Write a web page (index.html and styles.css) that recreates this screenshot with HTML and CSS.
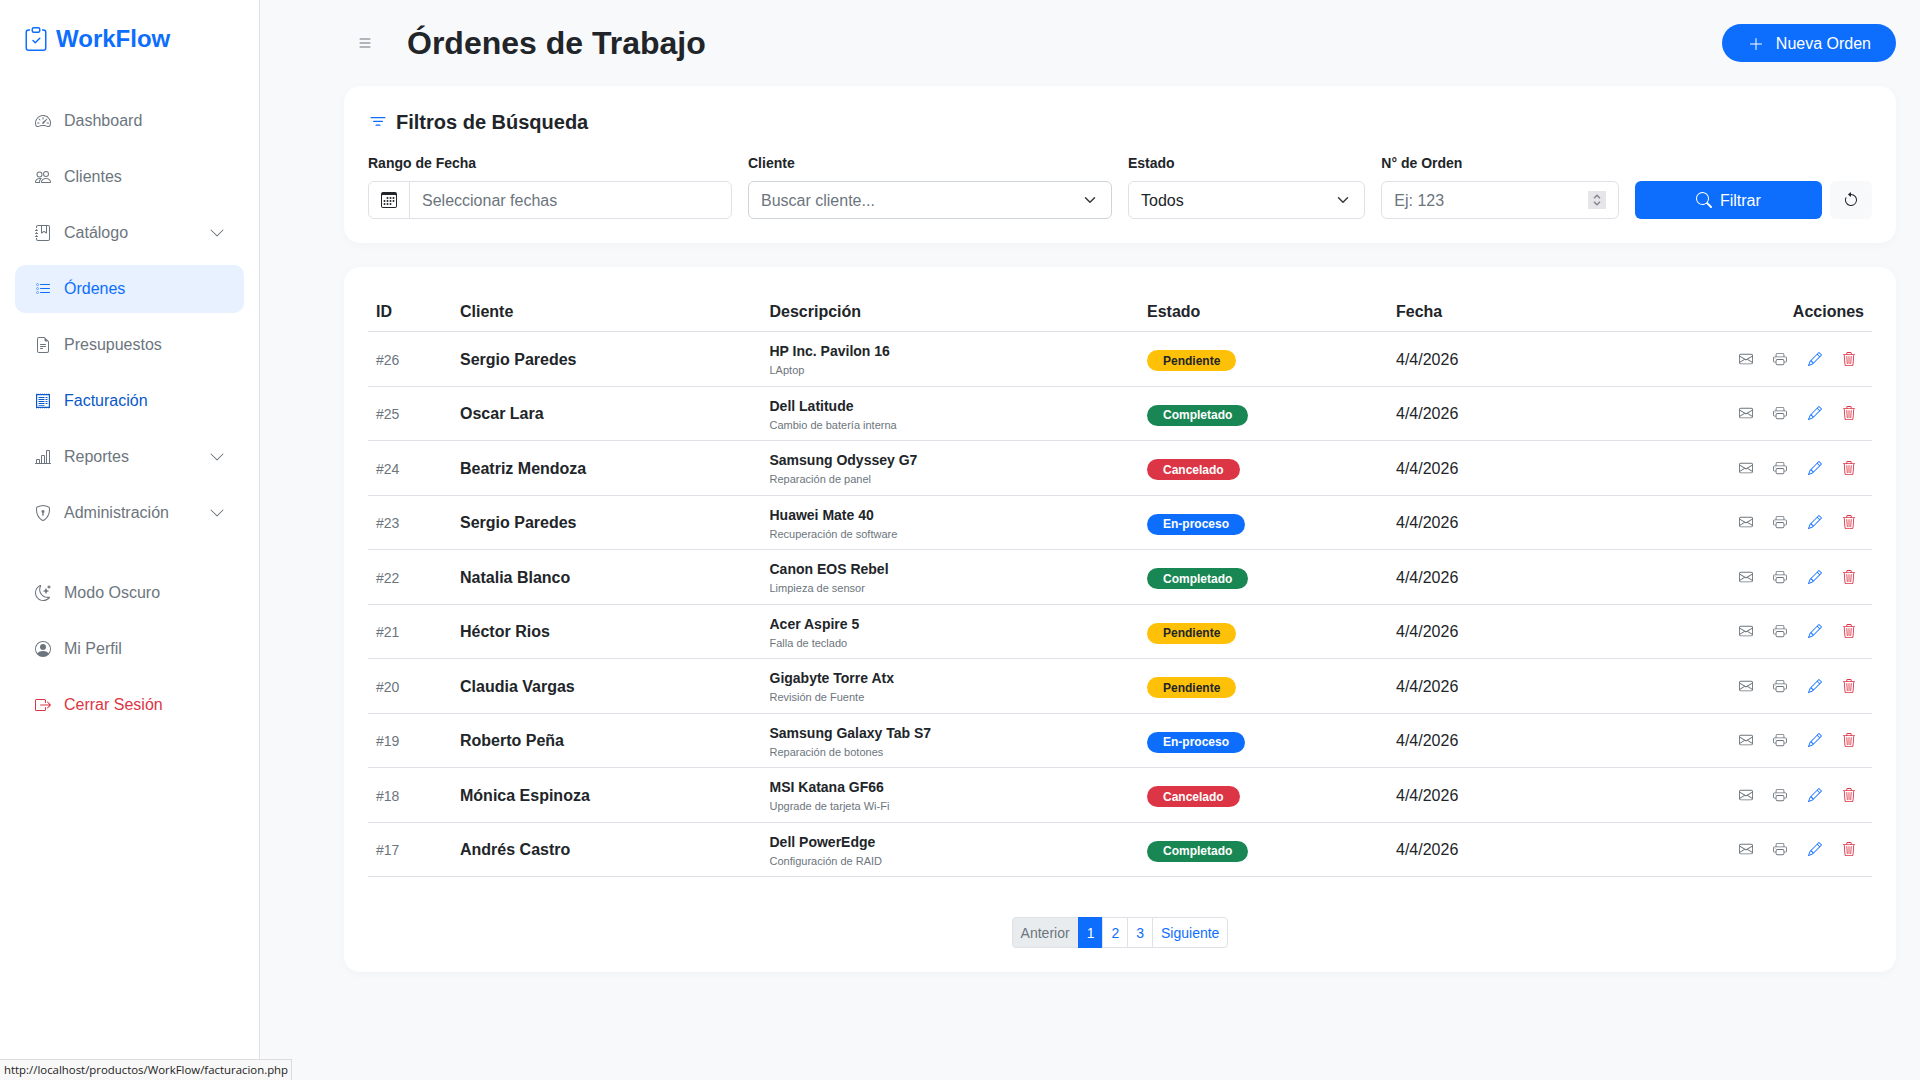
FILE: index.html
```html
<!DOCTYPE html>
<html lang="es">
<head>
<meta charset="utf-8">
<title>Órdenes de Trabajo</title>
<link rel="stylesheet" href="styles.css">
</head>
<body>
<svg class="sprite" xmlns="http://www.w3.org/2000/svg">
<symbol id="i-logo" viewBox="0 0 16 16"><path fill-rule="evenodd" d="M10.854 7.146a.5.5 0 0 1 0 .708l-3 3a.5.5 0 0 1-.708 0l-1.5-1.5a.5.5 0 1 1 .708-.708L7.5 9.793l2.646-2.647a.5.5 0 0 1 .708 0z"/><path d="M4 1.5H3a2 2 0 0 0-2 2V14a2 2 0 0 0 2 2h10a2 2 0 0 0 2-2V3.5a2 2 0 0 0-2-2h-1v1h1a1 1 0 0 1 1 1V14a1 1 0 0 1-1 1H3a1 1 0 0 1-1-1V3.5a1 1 0 0 1 1-1h1v-1z"/><path d="M9.5 1a.5.5 0 0 1 .5.5v1a.5.5 0 0 1-.5.5h-3a.5.5 0 0 1-.5-.5v-1a.5.5 0 0 1 .5-.5h3zm-3-1A1.5 1.5 0 0 0 5 1.5v1A1.5 1.5 0 0 0 6.5 4h3A1.5 1.5 0 0 0 11 2.5v-1A1.5 1.5 0 0 0 9.5 0h-3z"/></symbol>
<symbol id="i-speed" viewBox="0 0 16 16"><path d="M8 4a.5.5 0 0 1 .5.5V6a.5.5 0 0 1-1 0V4.5A.5.5 0 0 1 8 4zM3.732 5.732a.5.5 0 0 1 .707 0l.915.914a.5.5 0 1 1-.708.708l-.914-.915a.5.5 0 0 1 0-.707zM2 10a.5.5 0 0 1 .5-.5h1.586a.5.5 0 0 1 0 1H2.5A.5.5 0 0 1 2 10zm9.5 0a.5.5 0 0 1 .5-.5h1.5a.5.5 0 0 1 0 1H12a.5.5 0 0 1-.5-.5zm.754-4.246a.389.389 0 0 0-.527-.02L7.547 9.31a.91.91 0 1 0 1.302 1.258l3.434-4.297a.389.389 0 0 0-.029-.518z"/><path fill-rule="evenodd" d="M0 10a8 8 0 1 1 15.547 2.661c-.442 1.253-1.845 1.602-2.932 1.25C11.309 13.488 9.475 13 8 13c-1.474 0-3.31.488-4.615.911-1.087.352-2.49.003-2.932-1.25A7.988 7.988 0 0 1 0 10zm8-7a7 7 0 0 0-6.603 9.329c.203.575.923.876 1.68.63C4.397 12.533 6.358 12 8 12s3.604.532 4.923.96c.757.245 1.477-.056 1.68-.631A7 7 0 0 0 8 3z"/></symbol>
<symbol id="i-people" viewBox="0 0 16 16"><path d="M15 14s1 0 1-1-1-4-5-4-5 3-5 4 1 1 1 1h8Zm-7.978-1A.261.261 0 0 1 7 12.996c.001-.264.167-1.03.76-1.72C8.312 10.629 9.282 10 11 10c1.717 0 2.687.63 3.24 1.276.593.69.758 1.457.76 1.72l-.008.002a.274.274 0 0 1-.014.002H7.022ZM11 7a2 2 0 1 0 0-4 2 2 0 0 0 0 4Zm3-2a3 3 0 1 1-6 0 3 3 0 0 1 6 0ZM6.936 9.28a5.88 5.88 0 0 0-1.23-.247A7.35 7.35 0 0 0 5 9c-4 0-5 3-5 4 0 .667.333 1 1 1h4.216A2.238 2.238 0 0 1 5 13c0-1.01.377-2.042 1.09-2.904.243-.294.526-.569.846-.816ZM4.92 10A5.493 5.493 0 0 0 4 13H1c0-.26.164-1.03.76-1.724.545-.636 1.492-1.256 3.16-1.275ZM1.5 5.5a3 3 0 1 1 6 0 3 3 0 0 1-6 0Zm3-2a2 2 0 1 0 0 4 2 2 0 0 0 0-4Z"/></symbol>
<symbol id="i-journal" viewBox="0 0 16 16"><path fill-rule="evenodd" d="M6 8V1h1v6.117L8.743 6.07a.5.5 0 0 1 .514 0L11 7.117V1h1v7a.5.5 0 0 1-.757.429L9 7.083 6.757 8.43A.5.5 0 0 1 6 8z"/><path d="M3 0h10a2 2 0 0 1 2 2v12a2 2 0 0 1-2 2H3a2 2 0 0 1-2-2v-1h1v1a1 1 0 0 0 1 1h10a1 1 0 0 0 1-1V2a1 1 0 0 0-1-1H3a1 1 0 0 0-1 1v1H1V2a2 2 0 0 1 2-2z"/><path d="M1 5v-.5a.5.5 0 0 1 1 0V5h.5a.5.5 0 0 1 0 1h-2a.5.5 0 0 1 0-1H1zm0 3v-.5a.5.5 0 0 1 1 0V8h.5a.5.5 0 0 1 0 1h-2a.5.5 0 0 1 0-1H1zm0 3v-.5a.5.5 0 0 1 1 0v.5h.5a.5.5 0 0 1 0 1h-2a.5.5 0 0 1 0-1H1z"/></symbol>
<symbol id="i-task" viewBox="0 0 16 16"><path fill-rule="evenodd" d="M2 2.5a.5.5 0 0 0-.5.5v1a.5.5 0 0 0 .5.5h1a.5.5 0 0 0 .5-.5V3a.5.5 0 0 0-.5-.5H2zM3 3H2v1h1V3z"/><path d="M5 3.5a.5.5 0 0 1 .5-.5h9a.5.5 0 0 1 0 1h-9a.5.5 0 0 1-.5-.5zM5.5 7a.5.5 0 0 0 0 1h9a.5.5 0 0 0 0-1h-9zm0 4a.5.5 0 0 0 0 1h9a.5.5 0 0 0 0-1h-9z"/><path fill-rule="evenodd" d="M1.5 7a.5.5 0 0 1 .5-.5h1a.5.5 0 0 1 .5.5v1a.5.5 0 0 1-.5.5H2a.5.5 0 0 1-.5-.5V7zM2 7h1v1H2V7zm0 3.5a.5.5 0 0 0-.5.5v1a.5.5 0 0 0 .5.5h1a.5.5 0 0 0 .5-.5v-1a.5.5 0 0 0-.5-.5H2zm1 .5H2v1h1v-1z"/></symbol>
<symbol id="i-file" viewBox="0 0 16 16"><path d="M5.5 7a.5.5 0 0 0 0 1h5a.5.5 0 0 0 0-1h-5zM5 9.5a.5.5 0 0 1 .5-.5h5a.5.5 0 0 1 0 1h-5a.5.5 0 0 1-.5-.5zm0 2a.5.5 0 0 1 .5-.5h2a.5.5 0 0 1 0 1h-2a.5.5 0 0 1-.5-.5z"/><path d="M9.5 0H4a2 2 0 0 0-2 2v12a2 2 0 0 0 2 2h8a2 2 0 0 0 2-2V4.5L9.5 0zm0 1v2A1.5 1.5 0 0 0 11 4.5h2V14a1 1 0 0 1-1 1H4a1 1 0 0 1-1-1V2a1 1 0 0 1 1-1h5.5z"/></symbol>
<symbol id="i-invoice" viewBox="0 0 16 16"><path d="M1 1h14v14H1V1zm1.2 1.2v11.6h11.6V2.2H2.200z"/><path d="M3.500 4h6v1h-6zM3.500 6h6v1h-6zM3.500 8h6v1h-6zM3.500 10h6v1h-6zM3.500 12h6v.8h-6zM10.500 4h2v1h-2zM10.500 6h2v1h-2zM10.500 8h2v1h-2zM10.500 10h2v1h-2z"/><path opacity=".35" d="M1 0h1v.7H1zM3 0h1v.7H3zM5 0h1v.7H5zM7 0h1v.7H7zM9 0h1v.7H9zM11 0h1v.7h-1zM13 0h1v.7h-1zM1 15.300h1v.7H1zM3 15.300h1v.7H3zM5 15.300h1v.7H5zM7 15.300h1v.7H7zM9 15.300h1v.7H9zM11 15.300h1v.7h-1zM13 15.300h1v.7h-1z"/></symbol>
<symbol id="i-chart" viewBox="0 0 16 16"><path d="M11 2a1 1 0 0 1 1-1h2a1 1 0 0 1 1 1v12h.5a.5.5 0 0 1 0 1H.5a.5.5 0 0 1 0-1H1v-3a1 1 0 0 1 1-1h2a1 1 0 0 1 1 1v3h1V7a1 1 0 0 1 1-1h2a1 1 0 0 1 1 1v7h1V2zm1 12h2V2h-2v12zm-3 0V7H7v7h2zm-5 0v-3H2v3h2z"/></symbol>
<symbol id="i-shield" viewBox="0 0 16 16"><path d="M5.338 1.59a61.44 61.44 0 0 0-2.837.856.481.481 0 0 0-.328.39c-.554 4.157.726 7.19 2.253 9.188a10.725 10.725 0 0 0 2.287 2.233c.346.244.652.42.893.533.12.057.218.095.293.118a.55.55 0 0 0 .101.025.615.615 0 0 0 .1-.025c.076-.023.174-.061.294-.118.24-.113.547-.29.893-.533a10.726 10.726 0 0 0 2.287-2.233c1.527-1.997 2.807-5.031 2.253-9.188a.48.48 0 0 0-.328-.39c-.651-.213-1.75-.56-2.837-.855C9.552 1.29 8.531 1.067 8 1.067c-.53 0-1.552.223-2.662.524zM5.072.56C6.157.265 7.31 0 8 0s1.843.265 2.928.56c1.11.3 2.229.655 2.887.87a1.54 1.54 0 0 1 1.044 1.262c.596 4.477-.787 7.795-2.465 9.99a11.775 11.775 0 0 1-2.517 2.453 7.159 7.159 0 0 1-1.048.625c-.28.132-.581.24-.829.24s-.548-.108-.829-.24a7.158 7.158 0 0 1-1.048-.625 11.777 11.777 0 0 1-2.517-2.453C1.928 10.487.545 7.169 1.141 2.692A1.54 1.54 0 0 1 2.185 1.43 62.456 62.456 0 0 1 5.072.56z"/><path d="M9.5 6.5a1.5 1.5 0 0 1-1 1.415l.385 1.99a.5.5 0 0 1-.491.595h-.788a.5.5 0 0 1-.49-.595l.384-1.99a1.5 1.5 0 1 1 2-1.415z"/></symbol>
<symbol id="i-moon" viewBox="0 0 16 16"><path d="M6 .278a.768.768 0 0 1 .08.858 7.208 7.208 0 0 0-.878 3.46c0 4.021 3.278 7.277 7.318 7.277.527 0 1.04-.055 1.533-.16a.787.787 0 0 1 .81.316.733.733 0 0 1-.031.893A8.349 8.349 0 0 1 8.344 16C3.734 16 0 12.286 0 7.71 0 4.266 2.114 1.312 5.124.06A.752.752 0 0 1 6 .278zM4.858 1.311A7.269 7.269 0 0 0 1.025 7.71c0 4.02 3.279 7.276 7.319 7.276a7.316 7.316 0 0 0 5.205-2.162c-.337.042-.68.063-1.029.063-4.61 0-8.343-3.714-8.343-8.29 0-1.167.242-2.278.681-3.286z"/><path d="M10.794 3.148a.217.217 0 0 1 .412 0l.387 1.162c.173.518.579.924 1.097 1.097l1.162.387a.217.217 0 0 1 0 .412l-1.162.387a1.734 1.734 0 0 0-1.097 1.097l-.387 1.162a.217.217 0 0 1-.412 0l-.387-1.162A1.734 1.734 0 0 0 9.31 6.593l-1.162-.387a.217.217 0 0 1 0-.412l1.162-.387a1.734 1.734 0 0 0 1.097-1.097l.387-1.162zM13.863.099a.145.145 0 0 1 .274 0l.258.774c.115.346.386.617.732.732l.774.258a.145.145 0 0 1 0 .274l-.774.258a1.156 1.156 0 0 0-.732.732l-.258.774a.145.145 0 0 1-.274 0l-.258-.774a1.156 1.156 0 0 0-.732-.732l-.774-.258a.145.145 0 0 1 0-.274l.774-.258c.346-.115.617-.386.732-.732L13.863.1z"/></symbol>
<symbol id="i-person" viewBox="0 0 16 16"><path d="M11 6a3 3 0 1 1-6 0 3 3 0 0 1 6 0z"/><path fill-rule="evenodd" d="M0 8a8 8 0 1 1 16 0A8 8 0 0 1 0 8zm8-7a7 7 0 0 0-5.468 11.37C3.242 11.226 4.805 10 8 10s4.757 1.225 5.468 2.37A7 7 0 0 0 8 1z"/></symbol>
<symbol id="i-logout" viewBox="0 0 16 16"><path fill-rule="evenodd" d="M10 12.5a.5.5 0 0 1-.5.5h-8a.5.5 0 0 1-.5-.5v-9a.5.5 0 0 1 .5-.5h8a.5.5 0 0 1 .5.5v2a.5.5 0 0 0 1 0v-2A1.5 1.5 0 0 0 9.5 2h-8A1.5 1.5 0 0 0 0 3.5v9A1.5 1.5 0 0 0 1.5 14h8a1.5 1.5 0 0 0 1.5-1.5v-2a.5.5 0 0 0-1 0v2z"/><path fill-rule="evenodd" d="M15.854 8.354a.5.5 0 0 0 0-.708l-3-3a.5.5 0 0 0-.708.708L14.293 7.5H5.5a.5.5 0 0 0 0 1h8.793l-2.147 2.146a.5.5 0 0 0 .708.708l3-3z"/></symbol>
<symbol id="i-chevron" viewBox="0 0 16 16"><path fill-rule="evenodd" d="M1.646 4.646a.5.5 0 0 1 .708 0L8 10.293l5.646-5.647a.5.5 0 0 1 .708.708l-6 6a.5.5 0 0 1-.708 0l-6-6a.5.5 0 0 1 0-.708z"/></symbol>
<symbol id="i-select" viewBox="0 0 16 16"><path fill="none" stroke="currentColor" stroke-linecap="round" stroke-linejoin="round" stroke-width="2" d="m2 5 6 6 6-6"/></symbol>
<symbol id="i-spin" viewBox="0 0 8 5"><path fill="none" stroke="currentColor" stroke-width="1.5" d="M1 4.300 4 1.300l3 3"/></symbol>
<symbol id="i-list" viewBox="0 0 16 16"><path fill-rule="evenodd" d="M2.5 12a.5.5 0 0 1 .5-.5h10a.5.5 0 0 1 0 1H3a.5.5 0 0 1-.5-.5zm0-4a.5.5 0 0 1 .5-.5h10a.5.5 0 0 1 0 1H3a.5.5 0 0 1-.5-.5zm0-4a.5.5 0 0 1 .5-.5h10a.5.5 0 0 1 0 1H3a.5.5 0 0 1-.5-.5z"/></symbol>
<symbol id="i-plus" viewBox="0 0 16 16"><path fill-rule="evenodd" d="M8 2a.5.5 0 0 1 .5.5v5h5a.5.5 0 0 1 0 1h-5v5a.5.5 0 0 1-1 0v-5h-5a.5.5 0 0 1 0-1h5v-5A.5.5 0 0 1 8 2Z"/></symbol>
<symbol id="i-filter" viewBox="0 0 16 16"><path d="M6 10.5a.5.5 0 0 1 .5-.5h3a.5.5 0 0 1 0 1h-3a.5.5 0 0 1-.5-.5zm-2-3a.5.5 0 0 1 .5-.5h7a.5.5 0 0 1 0 1h-7a.5.5 0 0 1-.5-.5zm-2-3a.5.5 0 0 1 .5-.5h11a.5.5 0 0 1 0 1h-11a.5.5 0 0 1-.5-.5z"/></symbol>
<symbol id="i-calendar" viewBox="0 0 16 16"><path d="M14 0H2a2 2 0 0 0-2 2v12a2 2 0 0 0 2 2h12a2 2 0 0 0 2-2V2a2 2 0 0 0-2-2zM1 3.857C1 3.384 1.448 3 2 3h12c.552 0 1 .384 1 .857v10.286c0 .473-.448.857-1 .857H2c-.552 0-1-.384-1-.857V3.857z"/><path d="M6.5 7a1 1 0 1 0 0-2 1 1 0 0 0 0 2zm3 0a1 1 0 1 0 0-2 1 1 0 0 0 0 2zm3 0a1 1 0 1 0 0-2 1 1 0 0 0 0 2zm-9 3a1 1 0 1 0 0-2 1 1 0 0 0 0 2zm3 0a1 1 0 1 0 0-2 1 1 0 0 0 0 2zm3 0a1 1 0 1 0 0-2 1 1 0 0 0 0 2zm3 0a1 1 0 1 0 0-2 1 1 0 0 0 0 2zm-9 3a1 1 0 1 0 0-2 1 1 0 0 0 0 2zm3 0a1 1 0 1 0 0-2 1 1 0 0 0 0 2zm3 0a1 1 0 1 0 0-2 1 1 0 0 0 0 2z"/></symbol>
<symbol id="i-search" viewBox="0 0 16 16"><path d="M11.742 10.344a6.5 6.5 0 1 0-1.397 1.398h-.001c.03.04.062.078.098.115l3.85 3.85a1 1 0 0 0 1.415-1.414l-3.85-3.85a1.007 1.007 0 0 0-.115-.1zM12 6.5a5.5 5.5 0 1 1-11 0 5.5 5.5 0 0 1 11 0z"/></symbol>
<symbol id="i-reset" viewBox="0 0 16 16"><path fill-rule="evenodd" d="M8 3a5 5 0 1 1-4.546 2.914.5.5 0 0 0-.908-.417A6 6 0 1 0 8 2v1z"/><path d="M8 4.466V.534a.25.25 0 0 0-.41-.192L5.23 2.308a.25.25 0 0 0 0 .384l2.36 1.966A.25.25 0 0 0 8 4.466z"/></symbol>
<symbol id="i-mail" viewBox="0 0 16 16"><path d="M0 4a2 2 0 0 1 2-2h12a2 2 0 0 1 2 2v8a2 2 0 0 1-2 2H2a2 2 0 0 1-2-2V4Zm2-1a1 1 0 0 0-1 1v.217l7 4.2 7-4.2V4a1 1 0 0 0-1-1H2Zm13 2.383-4.708 2.825L15 11.105V5.383Zm-.034 6.876-5.64-3.471L8 9.583l-1.326-.795-5.64 3.47A1 1 0 0 0 2 13h12a1 1 0 0 0 .966-.741ZM1 11.105l4.708-2.897L1 5.383v5.722Z"/></symbol>
<symbol id="i-print" viewBox="0 0 16 16"><path d="M2.5 8a.5.5 0 1 0 0-1 .5.5 0 0 0 0 1z"/><path d="M5 1a2 2 0 0 0-2 2v2H2a2 2 0 0 0-2 2v3a2 2 0 0 0 2 2h1v1a2 2 0 0 0 2 2h6a2 2 0 0 0 2-2v-1h1a2 2 0 0 0 2-2V7a2 2 0 0 0-2-2h-1V3a2 2 0 0 0-2-2H5zM4 3a1 1 0 0 1 1-1h6a1 1 0 0 1 1 1v2H4V3zm1 5a2 2 0 0 0-2 2v1H2a1 1 0 0 1-1-1V7a1 1 0 0 1 1-1h12a1 1 0 0 1 1 1v3a1 1 0 0 1-1 1h-1v-1a2 2 0 0 0-2-2H5zm7 2v3a1 1 0 0 1-1 1H5a1 1 0 0 1-1-1v-3a1 1 0 0 1 1-1h6a1 1 0 0 1 1 1z"/></symbol>
<symbol id="i-pencil" viewBox="0 0 16 16"><path d="M12.146.146a.5.5 0 0 1 .708 0l3 3a.5.5 0 0 1 0 .708l-10 10a.5.5 0 0 1-.168.11l-5 2a.5.5 0 0 1-.65-.65l2-5a.5.5 0 0 1 .11-.168l10-10zM11.207 2.5 13.5 4.793 14.793 3.5 12.5 1.207 11.207 2.5zm1.586 3L10.5 3.207 4 9.707V10h.5a.5.5 0 0 1 .5.5v.5h.5a.5.5 0 0 1 .5.5v.5h.293l6.5-6.5zm-9.761 5.175-.106.106-1.528 3.821 3.821-1.528.106-.106A.5.5 0 0 1 5 12.5V12h-.5a.5.5 0 0 1-.5-.5V11h-.5a.5.5 0 0 1-.468-.325z"/></symbol>
<symbol id="i-trash" viewBox="0 0 16 16"><path d="M6.5 1h3a.5.5 0 0 1 .5.5v1H6v-1a.5.5 0 0 1 .5-.5ZM11 2.5v-1A1.5 1.5 0 0 0 9.5 0h-3A1.5 1.5 0 0 0 5 1.5v1H2.506a.58.58 0 0 0-.01 0H1.5a.5.5 0 0 0 0 1h.538l.853 10.66A2 2 0 0 0 4.885 16h6.23a2 2 0 0 0 1.994-1.84l.853-10.66h.538a.5.5 0 0 0 0-1h-.995a.59.59 0 0 0-.01 0H11Zm1.958 1-.846 10.58a1 1 0 0 1-.997.92h-6.23a1 1 0 0 1-.997-.92L3.042 3.5h9.916Zm-7.487 1a.5.5 0 0 1 .528.47l.5 8.5a.5.5 0 0 1-.998.06L5 5.03a.5.5 0 0 1 .47-.53Zm5.058 0a.5.5 0 0 1 .47.53l-.5 8.5a.5.5 0 1 1-.998-.06l.5-8.5a.5.5 0 0 1 .528-.47ZM8 4.5a.5.5 0 0 1 .5.5v8.5a.5.5 0 0 1-1 0V5a.5.5 0 0 1 .5-.5Z"/></symbol>
</svg>

<div class="layout">
  <aside class="sidebar">
    <div class="brand"><svg class="brand-icon"><use href="#i-logo"/></svg><span>WorkFlow</span></div>
    <nav class="nav">
      <a class="nav-item"><svg class="ico"><use href="#i-speed"/></svg><span>Dashboard</span></a>
      <a class="nav-item"><svg class="ico"><use href="#i-people"/></svg><span>Clientes</span></a>
      <a class="nav-item"><svg class="ico"><use href="#i-journal"/></svg><span>Catálogo</span><svg class="ico caret"><use href="#i-chevron"/></svg></a>
      <a class="nav-item active"><svg class="ico"><use href="#i-task"/></svg><span>Órdenes</span></a>
      <a class="nav-item"><svg class="ico"><use href="#i-file"/></svg><span>Presupuestos</span></a>
      <a class="nav-item hover"><svg class="ico"><use href="#i-invoice"/></svg><span>Facturación</span></a>
      <a class="nav-item"><svg class="ico"><use href="#i-chart"/></svg><span>Reportes</span><svg class="ico caret"><use href="#i-chevron"/></svg></a>
      <a class="nav-item"><svg class="ico"><use href="#i-shield"/></svg><span>Administración</span><svg class="ico caret"><use href="#i-chevron"/></svg></a>
    </nav>
    <nav class="nav nav-bottom">
      <a class="nav-item"><svg class="ico"><use href="#i-moon"/></svg><span>Modo Oscuro</span></a>
      <a class="nav-item"><svg class="ico"><use href="#i-person"/></svg><span>Mi Perfil</span></a>
      <a class="nav-item danger"><svg class="ico"><use href="#i-logout"/></svg><span>Cerrar Sesión</span></a>
    </nav>
  </aside>

  <main class="main">
    <header class="topbar">
      <div class="topbar-left">
        <button class="menu-btn"><svg class="ico"><use href="#i-list"/></svg></button>
        <h1 class="page-title">Órdenes de Trabajo</h1>
      </div>
      <button class="new-btn"><svg class="ico"><use href="#i-plus"/></svg><span>Nueva Orden</span></button>
    </header>

    <section class="card filters">
      <h2 class="filters-title"><svg class="filter-ico"><use href="#i-filter"/></svg><span>Filtros de Búsqueda</span></h2>
      <div class="filter-grid">
        <div class="field">
          <div class="label">Rango de Fecha</div>
          <div class="group">
            <div class="addon"><svg class="ico"><use href="#i-calendar"/></svg></div>
            <div class="control in-group placeholder"><span class="value">Seleccionar fechas</span></div>
          </div>
        </div>
        <div class="field">
          <div class="label">Cliente</div>
          <div class="control select placeholder dark-border"><span class="value">Buscar cliente...</span><svg class="select-ico"><use href="#i-select"/></svg></div>
        </div>
        <div class="field">
          <div class="label">Estado</div>
          <div class="control select"><span class="value">Todos</span><svg class="select-ico"><use href="#i-select"/></svg></div>
        </div>
        <div class="field">
          <div class="label">N° de Orden</div>
          <div class="control number placeholder"><span class="value">Ej: 123</span><span class="spinner"><svg class="spin-up"><use href="#i-spin"/></svg><svg class="spin-down"><use href="#i-spin"/></svg></span></div>
        </div>
        <div class="actions">
          <button class="filter-btn"><svg class="ico"><use href="#i-search"/></svg><span class="value">Filtrar</span></button>
          <button class="reset-btn"><svg class="ico"><use href="#i-reset"/></svg></button>
        </div>
      </div>
    </section>

    <section class="card orders">
      <table class="table">
        <colgroup><col class="c-id"><col class="c-client"><col class="c-desc"><col class="c-state"><col class="c-date"><col></colgroup>
        <thead>
          <tr><th>ID</th><th>Cliente</th><th>Descripción</th><th>Estado</th><th>Fecha</th><th class="right">Acciones</th></tr>
        </thead>
        <tbody>
          <tr><td class="oid">#26</td><td class="client">Sergio Paredes</td><td><b class="dev">HP Inc. Pavilon 16</b><small class="note">LAptop</small></td><td><span class="badge pending">Pendiente</span></td><td>4/4/2026</td><td class="right"><div class="row-actions"><button class="act gray"><svg><use href="#i-mail"/></svg></button><button class="act gray"><svg><use href="#i-print"/></svg></button><button class="act blue"><svg><use href="#i-pencil"/></svg></button><button class="act red"><svg><use href="#i-trash"/></svg></button></div></td></tr>
          <tr><td class="oid">#25</td><td class="client">Oscar Lara</td><td><b class="dev">Dell Latitude</b><small class="note">Cambio de batería interna</small></td><td><span class="badge done">Completado</span></td><td>4/4/2026</td><td class="right"><div class="row-actions"><button class="act gray"><svg><use href="#i-mail"/></svg></button><button class="act gray"><svg><use href="#i-print"/></svg></button><button class="act blue"><svg><use href="#i-pencil"/></svg></button><button class="act red"><svg><use href="#i-trash"/></svg></button></div></td></tr>
          <tr><td class="oid">#24</td><td class="client">Beatriz Mendoza</td><td><b class="dev">Samsung Odyssey G7</b><small class="note">Reparación de panel</small></td><td><span class="badge cancel">Cancelado</span></td><td>4/4/2026</td><td class="right"><div class="row-actions"><button class="act gray"><svg><use href="#i-mail"/></svg></button><button class="act gray"><svg><use href="#i-print"/></svg></button><button class="act blue"><svg><use href="#i-pencil"/></svg></button><button class="act red"><svg><use href="#i-trash"/></svg></button></div></td></tr>
          <tr><td class="oid">#23</td><td class="client">Sergio Paredes</td><td><b class="dev">Huawei Mate 40</b><small class="note">Recuperación de software</small></td><td><span class="badge progress">En-proceso</span></td><td>4/4/2026</td><td class="right"><div class="row-actions"><button class="act gray"><svg><use href="#i-mail"/></svg></button><button class="act gray"><svg><use href="#i-print"/></svg></button><button class="act blue"><svg><use href="#i-pencil"/></svg></button><button class="act red"><svg><use href="#i-trash"/></svg></button></div></td></tr>
          <tr><td class="oid">#22</td><td class="client">Natalia Blanco</td><td><b class="dev">Canon EOS Rebel</b><small class="note">Limpieza de sensor</small></td><td><span class="badge done">Completado</span></td><td>4/4/2026</td><td class="right"><div class="row-actions"><button class="act gray"><svg><use href="#i-mail"/></svg></button><button class="act gray"><svg><use href="#i-print"/></svg></button><button class="act blue"><svg><use href="#i-pencil"/></svg></button><button class="act red"><svg><use href="#i-trash"/></svg></button></div></td></tr>
          <tr><td class="oid">#21</td><td class="client">Héctor Rios</td><td><b class="dev">Acer Aspire 5</b><small class="note">Falla de teclado</small></td><td><span class="badge pending">Pendiente</span></td><td>4/4/2026</td><td class="right"><div class="row-actions"><button class="act gray"><svg><use href="#i-mail"/></svg></button><button class="act gray"><svg><use href="#i-print"/></svg></button><button class="act blue"><svg><use href="#i-pencil"/></svg></button><button class="act red"><svg><use href="#i-trash"/></svg></button></div></td></tr>
          <tr><td class="oid">#20</td><td class="client">Claudia Vargas</td><td><b class="dev">Gigabyte Torre Atx</b><small class="note">Revisión de Fuente</small></td><td><span class="badge pending">Pendiente</span></td><td>4/4/2026</td><td class="right"><div class="row-actions"><button class="act gray"><svg><use href="#i-mail"/></svg></button><button class="act gray"><svg><use href="#i-print"/></svg></button><button class="act blue"><svg><use href="#i-pencil"/></svg></button><button class="act red"><svg><use href="#i-trash"/></svg></button></div></td></tr>
          <tr><td class="oid">#19</td><td class="client">Roberto Peña</td><td><b class="dev">Samsung Galaxy Tab S7</b><small class="note">Reparación de botones</small></td><td><span class="badge progress">En-proceso</span></td><td>4/4/2026</td><td class="right"><div class="row-actions"><button class="act gray"><svg><use href="#i-mail"/></svg></button><button class="act gray"><svg><use href="#i-print"/></svg></button><button class="act blue"><svg><use href="#i-pencil"/></svg></button><button class="act red"><svg><use href="#i-trash"/></svg></button></div></td></tr>
          <tr><td class="oid">#18</td><td class="client">Mónica Espinoza</td><td><b class="dev">MSI Katana GF66</b><small class="note">Upgrade de tarjeta Wi-Fi</small></td><td><span class="badge cancel">Cancelado</span></td><td>4/4/2026</td><td class="right"><div class="row-actions"><button class="act gray"><svg><use href="#i-mail"/></svg></button><button class="act gray"><svg><use href="#i-print"/></svg></button><button class="act blue"><svg><use href="#i-pencil"/></svg></button><button class="act red"><svg><use href="#i-trash"/></svg></button></div></td></tr>
          <tr><td class="oid">#17</td><td class="client">Andrés Castro</td><td><b class="dev">Dell PowerEdge</b><small class="note">Configuración de RAID</small></td><td><span class="badge done">Completado</span></td><td>4/4/2026</td><td class="right"><div class="row-actions"><button class="act gray"><svg><use href="#i-mail"/></svg></button><button class="act gray"><svg><use href="#i-print"/></svg></button><button class="act blue"><svg><use href="#i-pencil"/></svg></button><button class="act red"><svg><use href="#i-trash"/></svg></button></div></td></tr>
        </tbody>
      </table>
      <div class="pagination">
        <a class="page disabled">Anterior</a>
        <a class="page current">1</a>
        <a class="page">2</a>
        <a class="page">3</a>
        <a class="page">Siguiente</a>
      </div>
    </section>
  </main>
</div>
<div class="status-url">http://localhost/productos/WorkFlow/facturacion.php</div>
</body>
</html>
```

FILE: styles.css
```css
* { box-sizing: border-box; }
html, body { margin: 0; height: 100%; }
body {
  font-family: "Liberation Sans", Arial, sans-serif;
  font-size: 16px;
  line-height: 1.5;
  color: #212529;
  background: #f8f9fa;
  overflow: hidden;
}
button { font-family: inherit; cursor: pointer; }
svg { fill: currentColor; }
.sprite { display: none; }
.ico { width: 16px; height: 16px; flex: none; display: block; }

.layout { display: flex; height: 1080px; }

.sidebar {
  width: 260px;
  flex: none;
  background: #fff;
  border-right: 1px solid #dee2e6;
  padding: 25px 15px 0;
}
.brand {
  display: flex;
  align-items: center;
  gap: 8px;
  height: 28px;
  margin: 0 0 44px 9px;
  color: #0d6efd;
  font-size: 24px;
  font-weight: 700;
  line-height: 28px;
}
.brand-icon { width: 24px; height: 24px; flex: none; margin-top: -1px; }
.nav { display: flex; flex-direction: column; gap: 8px; }
.nav-bottom { margin-top: 32px; }
.nav-item {
  display: flex;
  align-items: center;
  gap: 13px;
  height: 48px;
  padding: 0 20px;
  border-radius: 10px;
  color: #6c757d;
}
.nav-item .caret { margin-left: auto; margin-right: -1px; }
.nav-item.active { background: #e7f1ff; color: #0d6efd; }
.nav-item.hover { color: #0a58ca; }
.nav-item.danger { color: #dc3545; }

.main { flex: 1; min-width: 0; padding: 24px 24px 0 84px; }
.topbar {
  display: flex;
  justify-content: space-between;
  align-items: center;
  height: 38px;
  margin-bottom: 24px;
}
.topbar-left { display: flex; align-items: center; gap: 21px; }
.menu-btn {
  width: 42px;
  height: 38px;
  display: flex;
  align-items: center;
  justify-content: center;
  padding: 0;
  border: 0;
  background: none;
  color: #6c757d;
}
.page-title { margin: 0; font-size: 32px; line-height: 38px; font-weight: 700; }
.new-btn {
  display: flex;
  align-items: center;
  gap: 12px;
  height: 38px;
  padding: 1px 25px 0 26px;
  border: 0;
  border-radius: 50px;
  background: #0d6efd;
  color: #fff;
  font-size: 16px;
}

.card {
  background: #fff;
  border-radius: 16px;
  box-shadow: 0 2px 10px rgba(0, 0, 0, .03);
  padding: 24px;
}
.filters { margin-bottom: 24px; }
.filters-title {
  display: flex;
  align-items: center;
  gap: 8px;
  margin: 0 0 19px;
  font-size: 20px;
  line-height: 24px;
  font-weight: 700;
}
.filter-ico { width: 20px; height: 20px; color: #0d6efd; flex: none; }
.filter-grid {
  display: grid;
  grid-template-columns: 364px 364px 1fr 1fr 1fr;
  gap: 16px;
  align-items: end;
}
.label { font-size: 14px; line-height: 21px; font-weight: 700; margin-bottom: 7px; }
.value { margin-top: 2px; }
.control {
  height: 38px;
  display: flex;
  align-items: center;
  padding: 0 12px;
  border: 1px solid #dee2e6;
  border-radius: 6px;
  background: #fff;
}
.placeholder { color: #6c757d; }
.dark-border { border-color: #ced4da; }
.select { justify-content: space-between; padding-right: 15px; }
.select-ico { width: 12px; height: 12px; color: #343a40; flex: none; }
.group { display: flex; }
.addon {
  width: 42px;
  height: 38px;
  display: flex;
  align-items: center;
  justify-content: center;
  border: 1px solid #dee2e6;
  border-radius: 6px 0 0 6px;
  background: #fff;
  color: #212529;
}
.in-group { flex: 1; margin-left: -1px; border-radius: 0 6px 6px 0; }
.number { justify-content: space-between; padding-right: 12px; }
.spinner {
  width: 18px;
  height: 18px;
  background: #e6e6ea;
  display: flex;
  flex-direction: column;
  align-items: center;
  justify-content: center;
  gap: 2px;
  color: #85858a;
}
.spinner svg { width: 8px; height: 5px; display: block; }
.spin-down { transform: rotate(180deg); }
.actions { display: flex; gap: 8px; }
.filter-btn {
  flex: 1;
  height: 38px;
  display: flex;
  align-items: center;
  justify-content: center;
  gap: 8px;
  border: 0;
  border-radius: 6px;
  background: #0d6efd;
  color: #fff;
  font-size: 16px;
}
.reset-btn {
  width: 42px;
  height: 38px;
  display: flex;
  align-items: center;
  justify-content: center;
  border: 0;
  border-radius: 6px;
  background: #f8f9fa;
  color: #212529;
  padding: 0;
}

.table { width: 100%; border-collapse: collapse; table-layout: fixed; }
.c-id { width: 84px; }
.c-client { width: 309.5px; }
.c-desc { width: 377.5px; }
.c-state { width: 249px; }
.c-date { width: 0; }
.table th {
  text-align: left;
  padding: 9px 8px 7px;
  font-size: 16px;
  line-height: 24px;
  font-weight: 700;
  border-bottom: 1px solid #dee2e6;
}
.table td {
  padding: 9px 8px 7px;
  border-bottom: 1px solid #dee2e6;
  vertical-align: middle;
  line-height: 24px;
}
.table td.right { padding: 8px; }
.table .right { text-align: right; }
.oid { color: #6c757d; font-size: 14px; }
.client { font-weight: 700; }
.dev { display: block; font-size: 14px; line-height: 21px; font-weight: 700; }
.note { display: block; font-size: 11px; line-height: 16.5px; color: #6c757d; }
.badge {
  display: inline-block;
  padding: 4.5px 16px;
  font-size: 12px;
  line-height: 12px;
  font-weight: 700;
  border-radius: 50px;
  color: #fff;
  vertical-align: middle;
}
.pending { background: #ffc107; color: #212529; }
.done { background: #198754; }
.cancel { background: #dc3545; }
.progress { background: #0d6efd; }
.row-actions { display: flex; justify-content: flex-end; gap: 2.4px; margin-right: -1px; }
.act {
  width: 32px;
  height: 30px;
  padding: 0;
  border: 0;
  background: none;
  display: flex;
  align-items: center;
  justify-content: center;
}
.act svg { width: 14px; height: 14px; display: block; }
.gray { color: #6c757d; }
.blue { color: #0d6efd; }
.red { color: #dc3545; }

.pagination { display: flex; justify-content: center; margin-top: 40px; }
.page {
  padding: 5px 8px 3px;
  font-size: 14px;
  line-height: 21px;
  border: 1px solid #dee2e6;
  margin-left: -1px;
  color: #0d6efd;
  background: #fff;
}
.page:first-child { border-radius: 4px 0 0 4px; margin-left: 0; }
.page:last-child { border-radius: 0 4px 4px 0; }
.page.disabled { background: #e9ecef; color: #6c757d; }
.page.current { background: #0d6efd; border-color: #0d6efd; color: #fff; }

.status-url {
  position: fixed;
  left: 0;
  bottom: 0;
  width: 292px;
  height: 21px;
  padding-left: 4px;
  background: #f8f8f8;
  border: 1px solid #dcdcdc;
  border-width: 1px 1px 0 0;
  font-family: "Open Sans", sans-serif;
  font-size: 11.4px;
  line-height: 20px;
  color: #222;
  white-space: nowrap;
}
```
